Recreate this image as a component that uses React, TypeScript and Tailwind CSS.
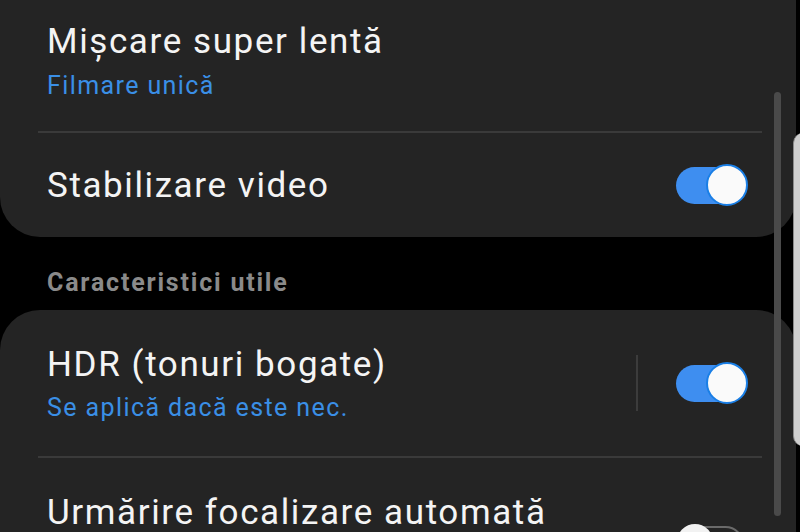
import React from "react";

function Toggle({ on }: { on: boolean }) {
  if (on) {
    return (
      <div className="relative w-[72px] h-[42px] shrink-0">
        <div className="absolute left-0 top-[3px] w-[68px] h-[37px] rounded-full bg-[#3e8ef0]" />
        <div className="absolute right-0 top-0 w-[42px] h-[42px] rounded-full bg-[#fafafa] border-[2px] border-[#1a7fe6]" />
      </div>
    );
  }
  return (
    <div className="relative w-[72px] h-[42px] shrink-0">
      <div className="absolute left-[1px] top-[2px] w-[66px] h-[37px] rounded-full border-[2px] border-[#6a6a6a]" />
      <div className="absolute left-0 top-0 w-[36px] h-[36px] rounded-full bg-[#f2f2f2]" />
    </div>
  );
}

export default function App() {
  const font = { fontFamily: "Roboto, 'Noto Sans', sans-serif" };
  const title = "text-[35px] leading-[40px] tracking-[1.6px] text-[#f4f4f4] whitespace-nowrap";
  const sub = "text-[25px] leading-[30px] tracking-[1.4px] text-[#3a8fe6] whitespace-nowrap";
  return (
    <div
      className="relative w-[800px] h-[532px] overflow-hidden bg-black"
      style={font}
    >
      <div className="flex flex-col">
        {/* Card 1 */}
        <div className="mr-[4px] bg-[#242424] rounded-b-[40px]">
          <div className="h-[131px] pl-[47px] pt-[22px] flex flex-col">
            <div className={title}>Mișcare super lentă</div>
            <div className={"mt-[9px] " + sub}>Filmare unică</div>
          </div>
          <div className="ml-[38px] mr-[34px] h-[2px] bg-[#3a3a3a]" />
          <div className="h-[104px] pl-[47px] pr-[48px] flex items-center justify-between">
            <div className={"pt-[2px] " + title}>Stabilizare video</div>
            <Toggle on />
          </div>
        </div>

        {/* Section header */}
        <div className="h-[73px] pl-[47px] pt-[31px]">
          <div className="text-[25px] leading-[30px] tracking-[1.8px] font-bold text-[#8a8a8a]">Caracteristici utile</div>
        </div>

        {/* Card 2 */}
        <div className="mr-[4px] bg-[#242424] rounded-t-[40px] h-[300px]">
          <div className="h-[146px] pl-[47px] pr-[48px] flex items-center">
            <div className="flex-1 flex flex-col pt-[2px]">
              <div className={title}>HDR (tonuri bogate)</div>
              <div className={"mt-[8px] " + sub}>Se aplică dacă este nec.</div>
            </div>
            <div className="w-[2px] h-[56px] bg-[#3c3c3c] mr-[38px]" />
            <Toggle on />
          </div>
          <div className="ml-[38px] mr-[34px] h-[2px] bg-[#3a3a3a]" />
          <div className="pl-[47px] pr-[48px] pt-[35px] flex items-start justify-between">
            <div className={title}>Urmărire focalizare automată</div>
          </div>
          <div className="pl-[677px] -mt-[9px]">
            <Toggle on={false} />
          </div>
        </div>
      </div>

      {/* Scrollbar */}
      <div className="absolute left-[774px] top-[92px] w-[7px] h-[424px] rounded-full bg-[#4a4a4a]" />
      {/* Edge panel handle */}
      <div className="absolute left-[793px] top-[133px] w-[14px] h-[313px] rounded-l-[10px] bg-[#cfcfcf] border-l border-[#8a8a8a]" />
    </div>
  );
}
